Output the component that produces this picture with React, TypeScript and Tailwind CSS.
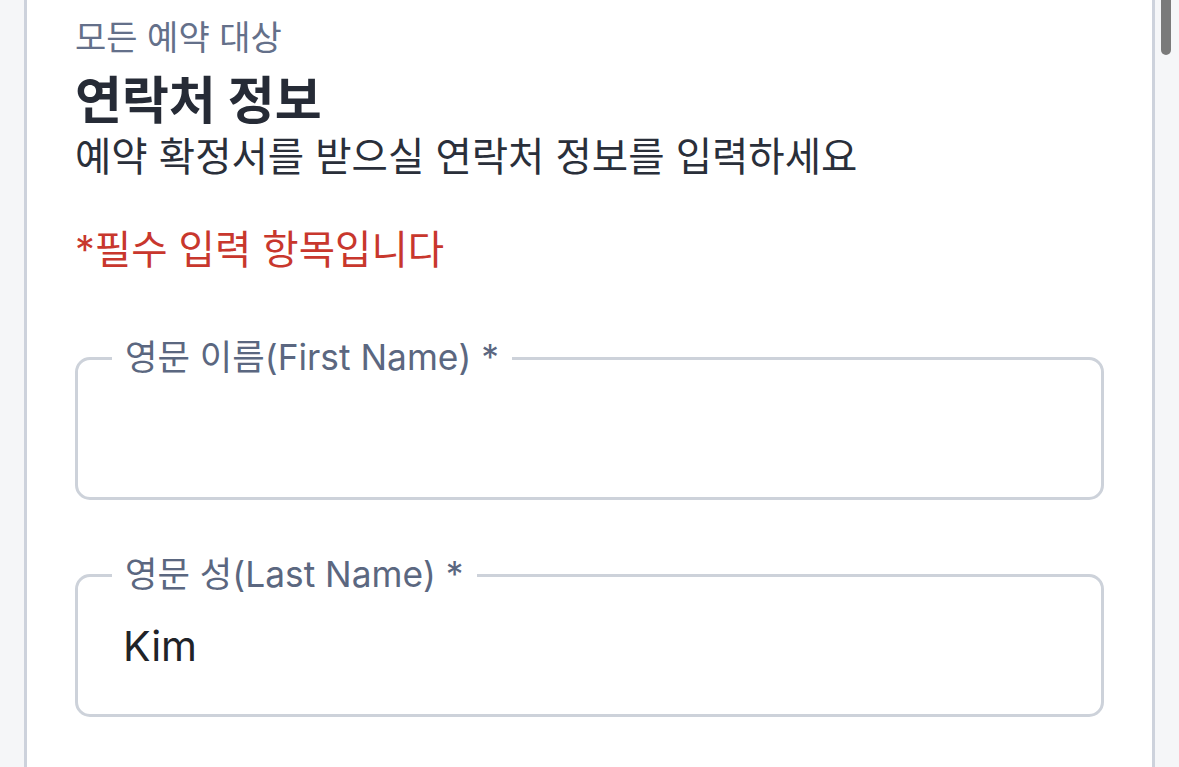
import React from "react";

const FONT = '"Inter", "Noto Sans CJK KR", sans-serif';

function Field({ label, value }: { label: string; value?: string }) {
  return (
    <fieldset className="w-full border-[3px] border-[#cdd2da] rounded-[15px] p-0 m-0">
      <legend className="ml-[34px] px-[13px] text-[35.3px] leading-[40px] text-[#5b6780]">
        {label}
      </legend>
      <div className="h-[119px] pl-[45px] pt-[29px] text-[41px] leading-[44px] text-[#1f2328]">
        {value ?? ""}
      </div>
    </fieldset>
  );
}

export default function App() {
  return (
    <div
      className="flex h-[767px] w-full overflow-hidden bg-[#f5f6f8]"
      style={{ fontFamily: FONT }}
    >
      <div className="ml-[24px] w-[1131px] shrink-0 h-full bg-white border-x-[3px] border-[#cdd2dc]">
        <div className="flex flex-col px-[48px] pt-[18px]">
          <div className="text-[34px] leading-[40px] text-[#64708a]">모든 예약 대상</div>
          <h1 className="mt-[13px] text-[51px] leading-[60px] font-bold text-[#262b36]">연락처 정보</h1>
          <p className="mt-[2px] text-[39.5px] leading-[48px] text-[#2a2f3a]">
            예약 확정서를 받으실 연락처 정보를 입력하세요
          </p>
          <p className="mt-[45px] text-[39.5px] leading-[48px] text-[#c8372d]">*필수 입력 항목입니다</p>
          <div className="mt-[64px]">
            <Field label="영문 이름(First Name) *" />
          </div>
          <div className="mt-[55px]">
            <Field label="영문 성(Last Name) *" value="Kim" />
          </div>
        </div>
      </div>
      <div className="w-[24px] shrink-0">
        <div className="ml-[6px] w-[10px] h-[55px] bg-[#7a7a7a] rounded-b-full" />
      </div>
    </div>
  );
}
